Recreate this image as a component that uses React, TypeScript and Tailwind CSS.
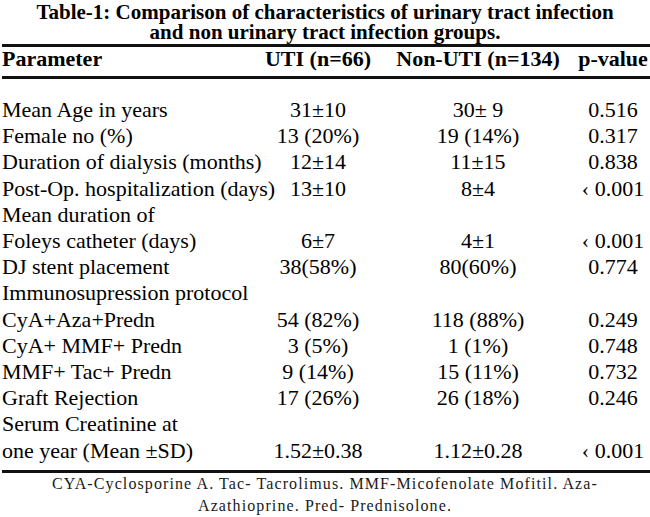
const rows: [string, string, string, string][] = [
  ["Mean Age in years", "31±10", "30± 9", "0.516"],
  ["Female no (%)", "13 (20%)", "19 (14%)", "0.317"],
  ["Duration of dialysis (months)", "12±14", "11±15", "0.838"],
  ["Post-Op. hospitalization (days)", "13±10", "8±4", "‹ 0.001"],
  ["Mean duration of", "", "", ""],
  ["Foleys catheter (days)", "6±7", "4±1", "‹ 0.001"],
  ["DJ stent placement", "38(58%)", "80(60%)", "0.774"],
  ["Immunosupression protocol", "", "", ""],
  ["CyA+Aza+Predn", "54 (82%)", "118 (88%)", "0.249"],
  ["CyA+ MMF+ Predn", "3 (5%)", "1 (1%)", "0.748"],
  ["MMF+ Tac+ Predn", "9 (14%)", "15 (11%)", "0.732"],
  ["Graft Rejection", "17 (26%)", "26 (18%)", "0.246"],
  ["Serum Creatinine at", "", "", ""],
  ["one year (Mean ±SD)", "1.52±0.38", "1.12±0.28", "‹ 0.001"],
]

const cols = "grid grid-cols-[256px_120px_200px_70px]"

export default function App() {
  return (
    <div className="w-[650px] h-[517px] overflow-hidden bg-white text-black font-['Liberation_Serif','Times_New_Roman',serif]">
      {/* title */}
      <div className="h-[44px] pt-[2px] text-center text-[21px] font-bold leading-[20px]">
        Table-1: Comparison of characteristics of urinary tract infection
        <br />
        and non urinary tract infection groups.
      </div>

      <div className="ml-[2px] h-[3px] bg-[#111]" />

      {/* header */}
      <div className={`${cols} pl-[2px] pb-[5px] text-[22px] font-bold leading-[24px]`}>
        <div className="whitespace-nowrap">Parameter</div>
        <div className="text-center whitespace-nowrap">UTI (n=66)</div>
        <div className="text-center whitespace-nowrap">Non-UTI (n=134)</div>
        <div className="text-center whitespace-nowrap">p-value</div>
      </div>

      <div className="ml-[2px] h-[3px] bg-[#111]" />

      {/* body */}
      <div className="pt-[18px] pb-[6px] pl-[2px] text-[22px] leading-[26.2px]">
        {rows.map((r, i) => (
          <div key={i} className={cols}>
            <div className="whitespace-nowrap">{r[0]}</div>
            <div className="text-center whitespace-nowrap">{r[1]}</div>
            <div className="text-center whitespace-nowrap">{r[2]}</div>
            <div className="text-center whitespace-nowrap">{r[3]}</div>
          </div>
        ))}
      </div>

      <div className="ml-[2px] h-[3px] bg-[#111]" />

      {/* footnote */}
      <div className="text-center text-[16px] leading-[22px] tracking-[1.1px] text-[#1a1a1a]">
        CYA-Cyclosporine A. Tac- Tacrolimus. MMF-Micofenolate Mofitil. Aza-
        <br />
        Azathioprine. Pred- Prednisolone.
      </div>
    </div>
  )
}
